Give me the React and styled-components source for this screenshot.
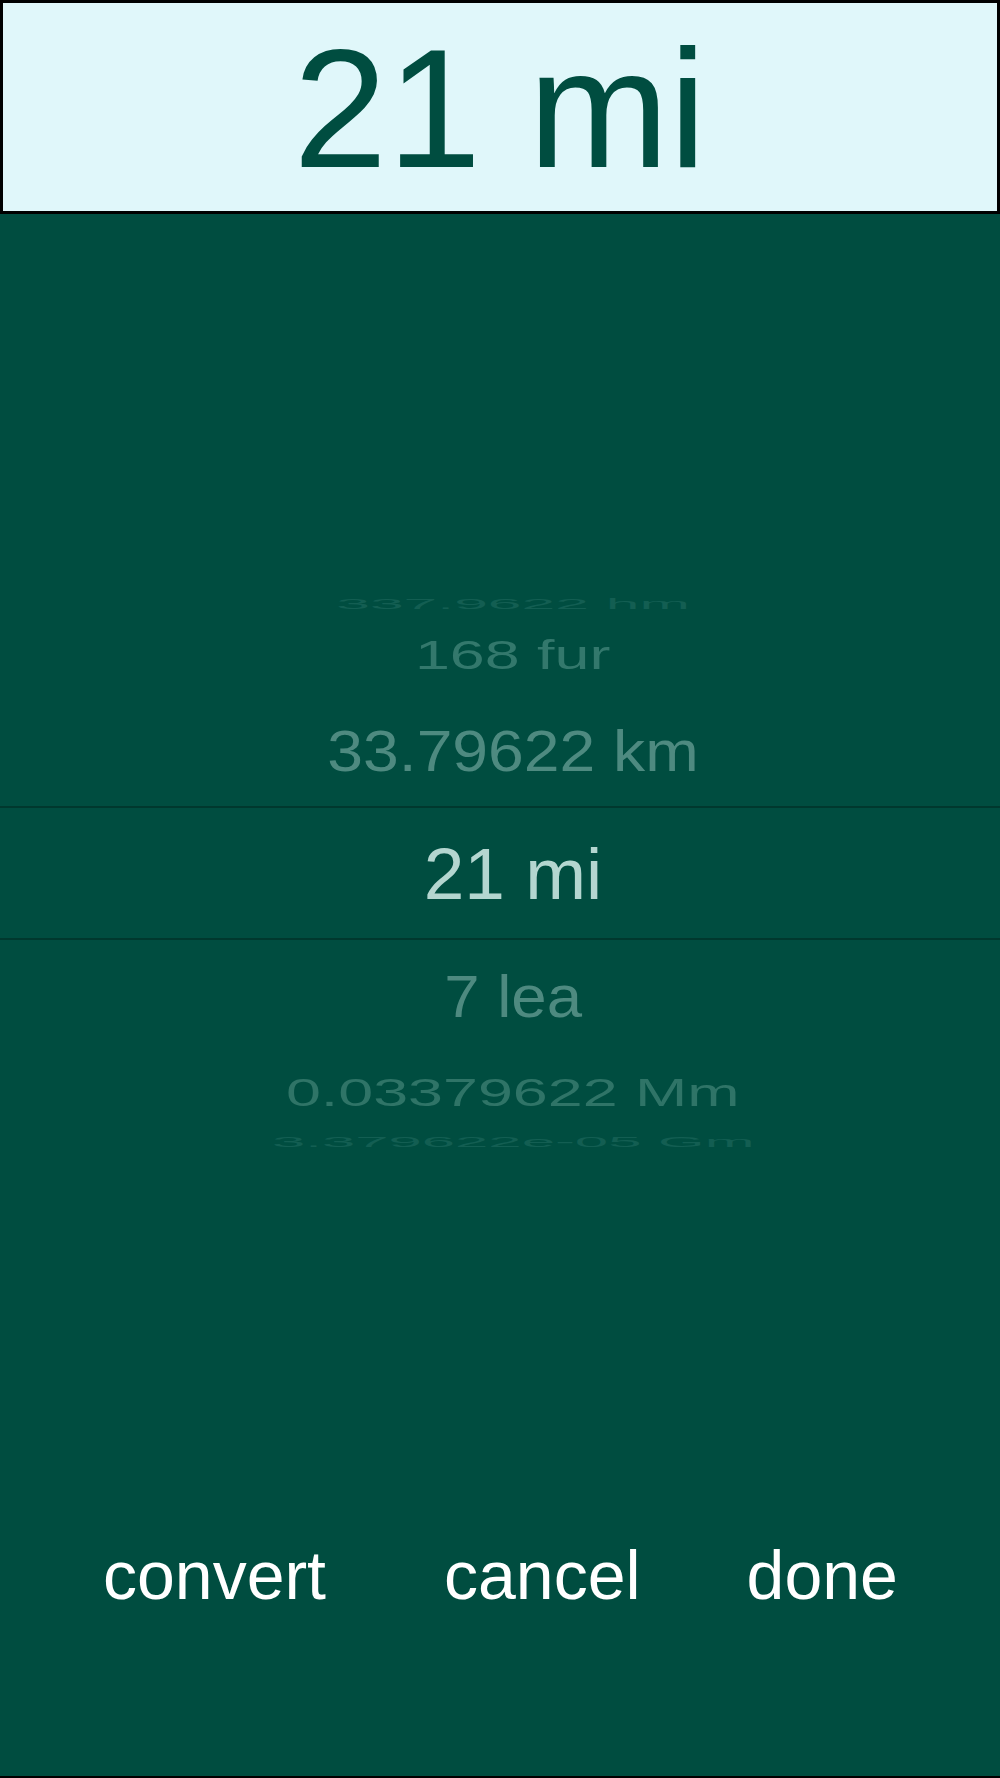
import React from "react";
import styled, { createGlobalStyle } from "styled-components";

const GlobalStyle = createGlobalStyle`
  html, body {
    margin: 0;
    padding: 0;
    background: #000;
  }
  body {
    font-family: "Liberation Sans", Arial, Helvetica, sans-serif;
  }
  * { box-sizing: border-box; }
`;

const Screen = styled.div`
  width: 1000px;
  height: 1776px;
  display: flex;
  flex-direction: column;
  background: #004d40;
  font-family: "Liberation Sans", Arial, Helvetica, sans-serif;
`;

const Header = styled.header`
  height: 214px;
  flex: none;
  border: 3px solid #000;
  background: #e0f7fa;
  display: flex;
  align-items: center;
  justify-content: center;
  padding-top: 3px;
`;

const HeaderValue = styled.div`
  font-size: 169px;
  line-height: 1;
  color: #004d40;
  white-space: nowrap;
`;

const PickerArea = styled.section`
  flex: 1;
  padding-top: 378px;
`;

const Wheel = styled.div`
  display: flex;
  flex-direction: column;
  padding-left: 26px;
`;

const Row = styled.div`
  height: ${(p) => p.$h}px;
  display: flex;
  align-items: center;
  justify-content: center;
  overflow: visible;
  ${(p) =>
    p.$selected &&
    `
    margin-left: -26px;
    padding-left: 26px;
    border-top: 2px solid #00382e;
    border-bottom: 2px solid #00382e;
  `}
`;

const Label = styled.span`
  font-size: 73px;
  line-height: 1;
  white-space: nowrap;
  color: ${(p) => p.$color};
  transform-origin: center center;
`;

const ButtonBar = styled.nav`
  flex: none;
  display: flex;
  justify-content: flex-start;
  padding: 0 0 167px 103px;
`;

const ActionButton = styled.button`
  font-family: "Liberation Sans", Arial, Helvetica, sans-serif;
  font-size: 68px;
  line-height: 1;
  color: #ffffff;
  background: none;
  border: none;
  padding: 0;
  margin: 0 0 0 ${(p) => p.$gap || 0}px;
  cursor: pointer;
`;

const rows = [
  { text: "337.9622 hm", h: 22, sx: 0.83, sy: 0.2, color: "#135e52" },
  { text: "168 fur", h: 80, sx: 0.86, sy: 0.56, color: "#33786c" },
  { text: "33.79622 km", h: 112, sx: 0.88, sy: 0.79, color: "#4e8a80" },
  { text: "21 mi", h: 134, sx: 1, sy: 1, color: "#b4d6d0", selected: true },
  { text: "7 lea", h: 112, sx: 0.87, sy: 0.81, color: "#4e8a80" },
  { text: "0.03379622 Mm", h: 80, sx: 0.86, sy: 0.54, color: "#2f7467" },
  { text: "3.379622e-05 Gm", h: 20, sx: 0.82, sy: 0.19, color: "#135e52" },
];

export default function App() {
  return (
    <>
      <GlobalStyle />
      <Screen>
        <Header>
          <HeaderValue>21 mi</HeaderValue>
        </Header>
        <PickerArea>
          <Wheel>
            {rows.map((r) => (
              <Row key={r.text} $h={r.h} $selected={r.selected}>
                <Label
                  $color={r.color}
                  style={{ transform: `scale(${r.sx}, ${r.sy})` }}
                >
                  {r.text}
                </Label>
              </Row>
            ))}
          </Wheel>
        </PickerArea>
        <ButtonBar>
          <ActionButton>convert</ActionButton>
          <ActionButton $gap={118}>cancel</ActionButton>
          <ActionButton $gap={106}>done</ActionButton>
        </ButtonBar>
      </Screen>
    </>
  );
}
